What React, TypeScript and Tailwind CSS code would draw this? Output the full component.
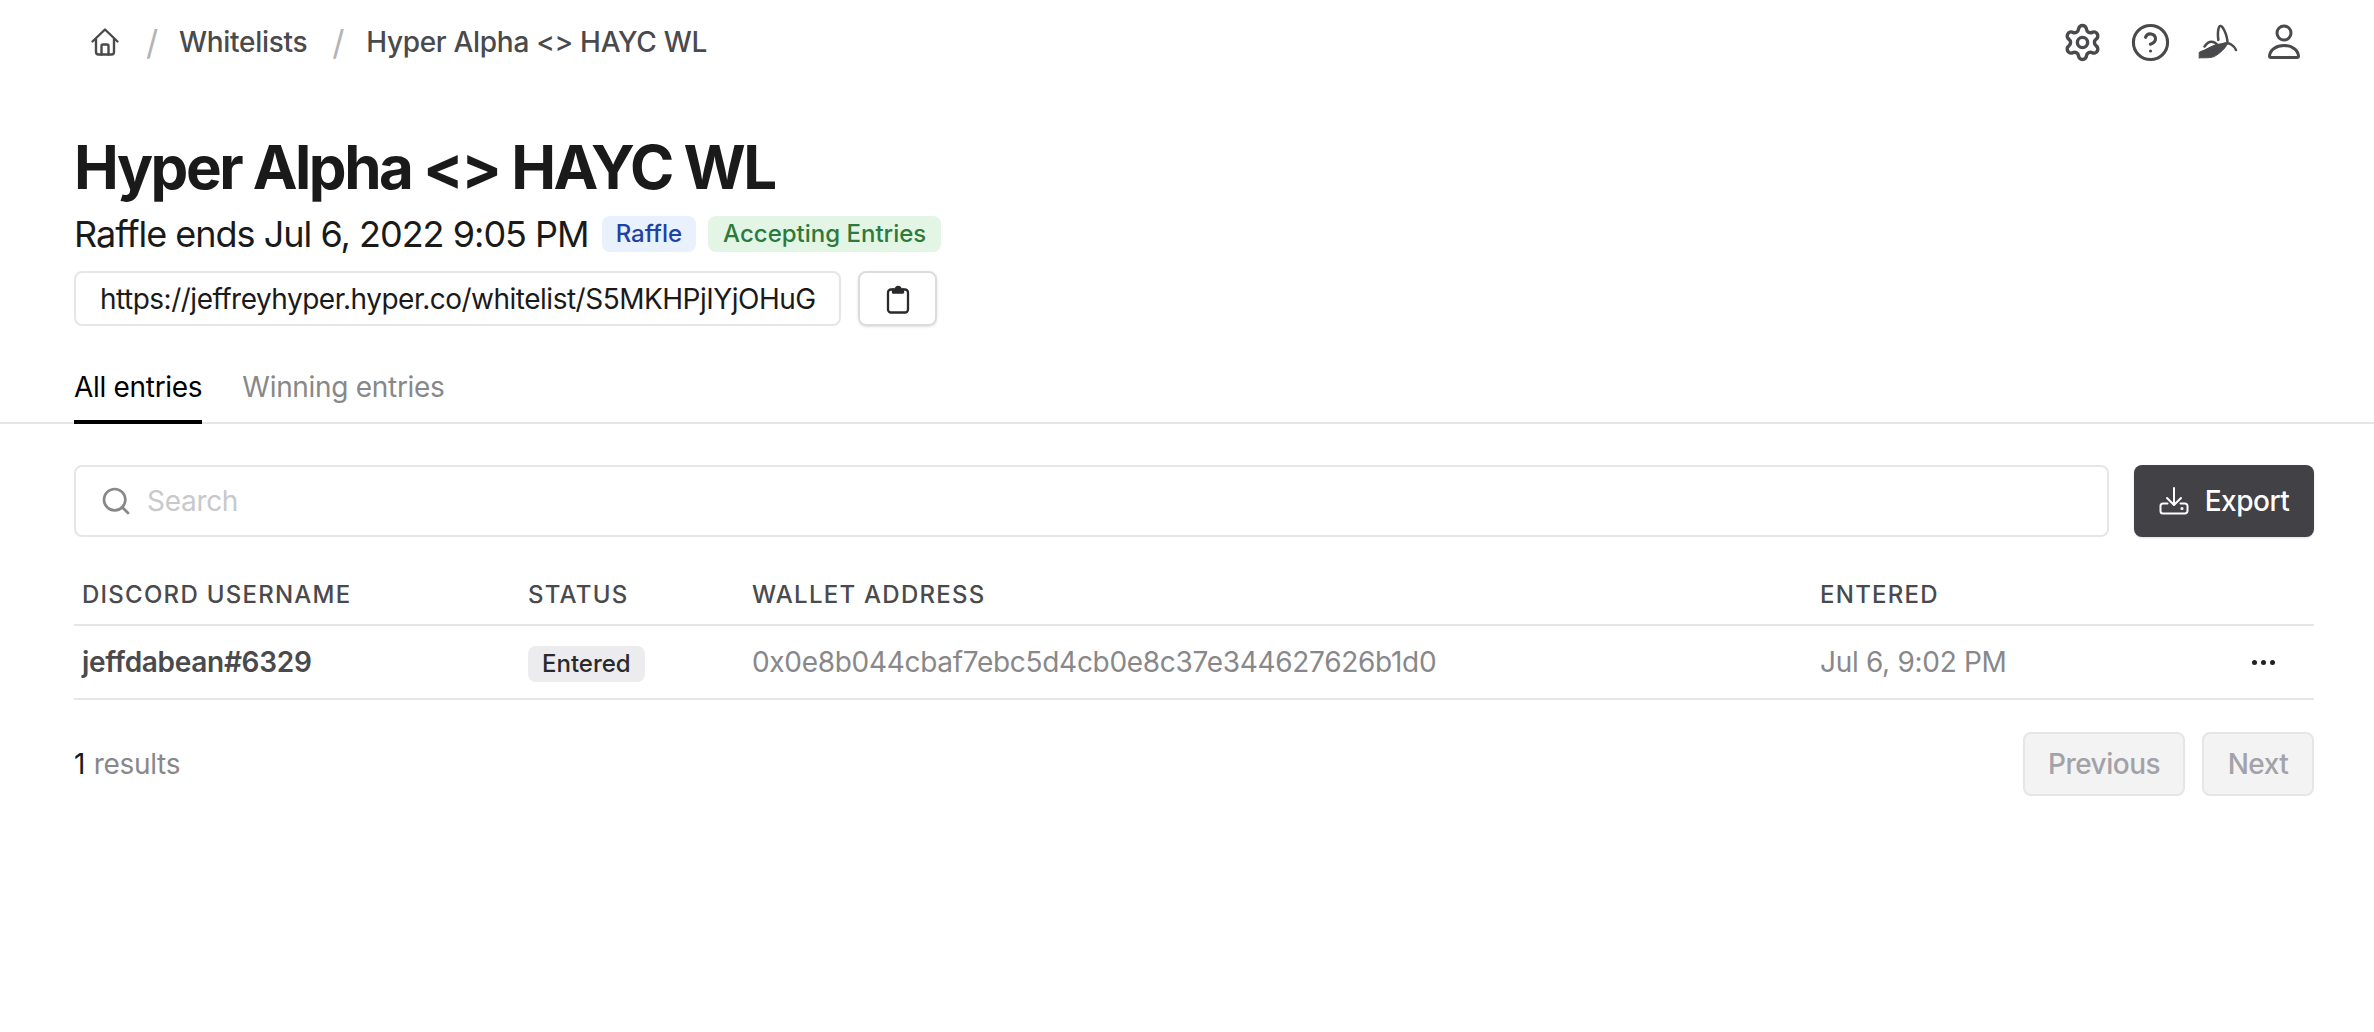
import React from 'react';
import { Search, Settings, CircleHelp } from 'lucide-react';

const HomeIcon = () => (
  <svg width="30" height="30" viewBox="0 0 30 30" fill="none" stroke="#4a4a4d" strokeWidth="2.400" strokeLinecap="round" strokeLinejoin="round">
    <path d="M2.500 14.500 15 2.500l12.500 12" />
    <path d="M6 12v13a2.500 2.500 0 0 0 2.500 2.500h13A2.500 2.500 0 0 0 24 25V12" />
    <path d="M11.500 27.500V19a1.500 1.500 0 0 1 1.500-1.500h4a1.500 1.500 0 0 1 1.500 1.500v8.500" />
  </svg>
);

const BananaIcon = () => (
  <svg width="40" height="36" viewBox="0 0 40 36" fill="none" stroke="#4a4a4d" strokeLinecap="round" strokeLinejoin="round">
    <path d="M20.300 16c-.5-4-.6-9 .5-12.500.5-1.800 2.500-2 3.500-.5 2.500 3.500 4.500 9 5.200 14.500" strokeWidth="2.500" />
    <path d="M1.200 33.800v-5c0-.8.6-1 1.400-1.200C8 26 12 22.500 18 20.800c4-1 8-1.500 11.500-1.300-1 2.500-3 5-5.500 7.300-2.500 2.300-5.500 4.700-8.500 6-3 1-7 1-13.800 1z" fill="#4a4a4d" strokeWidth="1" />
    <path d="M6.500 22.500c2-3 4.500-4.800 7-4.800 2.500 0 4.500 1.300 6 3.300" strokeWidth="2.500" />
    <path d="M24.700 20.300c3-1.300 6-1.300 8.500.2 2 1.200 3.800 3.300 4.800 5.500" strokeWidth="2.500" />
  </svg>
);

const UserIcon = () => (
  <svg width="32" height="36" viewBox="0 0 32 36" fill="none" stroke="#4a4a4d" strokeWidth="3">
    <circle cx="16" cy="9" r="7" />
    <path d="M3 33.500c-1 0-1.500-.5-1.500-1.500C2 26 8 21.500 16 21.500S30 26 30.500 32c0 1-.5 1.500-1.500 1.500H3z" strokeLinejoin="round" />
  </svg>
);

const ClipboardIcon = () => (
  <svg width="24" height="30" viewBox="0 0 24 30" fill="none" stroke="#2a2a2d" strokeWidth="2.300" strokeLinecap="round" strokeLinejoin="round">
    <path d="M7 5.500H5a3 3 0 0 0-3 3V25.500a3 3 0 0 0 3 3h14a3 3 0 0 0 3-3V8.500a3 3 0 0 0-3-3h-2" />
    <path d="M7 8.500v-3h2.500a2.500 2.500 0 0 1 5 0H17v3z" fill="#2a2a2d" />
  </svg>
);

const ExportIcon = () => (
  <svg width="30" height="30" viewBox="0 0 30 30" fill="none" stroke="#ffffff" strokeWidth="2" strokeLinecap="round" strokeLinejoin="round">
    <path d="M15 2v16" />
    <path d="M8 12l7 7 7-7" />
    <path d="M8.500 17.500H4a2.500 2.500 0 0 0-2.500 2.500v5A2.500 2.500 0 0 0 4 27.500h22a2.500 2.500 0 0 0 2.500-2.500v-5a2.500 2.500 0 0 0-2.500-2.500h-4.500" />
    <circle cx="23" cy="22.500" r=".6" fill="#ffffff" />
  </svg>
);

export default function App() {
  return (
    <div className="min-h-screen bg-white font-['Inter',sans-serif] text-[#1a1a1a]">
      {/* Top bar */}
      <div className="h-[84px] flex items-center justify-between pl-[90px] pr-[74px]">
        <div className="flex items-center text-[28px] font-medium tracking-[-0.3px] text-[#4a4a4d]">
          <HomeIcon />
          <span className="ml-[26px] mr-[21px] text-[34px] font-normal text-[#b4b4b6]">/</span>
          <span>Whitelists</span>
          <span className="ml-[25px] mr-[22px] text-[34px] font-normal text-[#b4b4b6]">/</span>
          <span>Hyper Alpha &lt;&gt; HAYC WL</span>
        </div>
        <div className="flex items-center text-[#4a4a4d]">
          <Settings size={41} strokeWidth={2} />
          <CircleHelp size={41} strokeWidth={1.8} className="ml-[27px]" />
          <div className="ml-[27px]"><BananaIcon /></div>
          <div className="ml-[30px]"><UserIcon /></div>
        </div>
      </div>

      {/* Heading */}
      <div className="px-[74px] pt-[44px]">
        <h1 className="text-[60px] leading-[78px] font-bold tracking-[-2.5px]">Hyper Alpha &lt;&gt; HAYC WL</h1>
        <div className="flex items-center mt-[5px] h-[46px]">
          <span className="text-[36px] tracking-[-1px]">Raffle ends Jul 6, 2022 9:05 PM</span>
          <span className="ml-[13px] h-[36px] px-[14px] flex items-center rounded-[8px] bg-[#e9f1fd] text-[#1f42a3] text-[24px] font-medium">Raffle</span>
          <span className="ml-[12px] h-[36px] px-[15px] flex items-center rounded-[8px] bg-[#e3f6e5] text-[#2e7a3d] text-[24px] font-medium">Accepting Entries</span>
        </div>
        <div className="flex items-center mt-[14px] gap-[17px]">
          <div className="w-[767px] h-[55px] flex items-center px-[24px] rounded-[8px] border-2 border-[#e6e6e6] text-[28px] tracking-[-0.5px] whitespace-nowrap">
            <span>https://jeffreyhyper.hyper.co/whitelist/S5MKHPjIYjOHuG</span>
          </div>
          <button className="w-[79px] h-[55px] flex items-center justify-center rounded-[8px] border-2 border-[#dcdce0] shadow-sm">
            <ClipboardIcon />
          </button>
        </div>
      </div>

      {/* Tabs */}
      <div className="mt-[38px] px-[74px] h-[60px] flex gap-[40px] border-b-2 border-[#e6e6e6] text-[28px] tracking-[-0.3px]">
        <div className="h-[60px] border-b-[4px] border-black text-black leading-[46px]">All entries</div>
        <div className="text-[#88888a] leading-[46px]">Winning entries</div>
      </div>

      {/* Search and export */}
      <div className="pl-[74px] pr-[60px] pt-[41px] flex gap-[25px]">
        <div className="flex-1 h-[72px] flex items-center px-[24px] gap-[15px] rounded-[8px] border-2 border-[#e6e6e6] text-[28px] tracking-[-0.3px] text-[#c9c9cc]">
          <Search size={32} strokeWidth={2} color="#88888a" />
          <span>Search</span>
        </div>
        <button className="w-[180px] h-[72px] flex items-center justify-center gap-[16px] rounded-[8px] bg-[#414146] text-white text-[28px] tracking-[-0.5px] font-medium shadow-sm">
          <ExportIcon />
          Export
        </button>
      </div>

      {/* Table */}
      <div className="ml-[74px] mr-[60px] mt-[28px]">
        <div className="h-[61px] flex items-center border-b-2 border-[#e6e6e6] text-[24px] font-medium tracking-[1.25px] text-[#4a4a4d]">
          <div className="w-[454px] pl-[8px]">DISCORD USERNAME</div>
          <div className="w-[224px]">STATUS</div>
          <div className="w-[1068px]">WALLET ADDRESS</div>
          <div>ENTERED</div>
        </div>
        <div className="h-[74px] flex items-center border-b-2 border-[#e6e6e6] text-[28px] tracking-[-0.3px]">
          <div className="w-[454px] pl-[8px] font-semibold text-[#4a4a4d]">jeffdabean#6329</div>
          <div className="w-[224px]">
            <span className="inline-flex h-[36px] px-[14px] items-center rounded-[8px] bg-[#ececee] text-[24px] tracking-normal font-medium text-[#2a2a2d]">Entered</span>
          </div>
          <div className="w-[1068px] text-[#88888a]">0x0e8b044cbaf7ebc5d4cb0e8c37e344627626b1d0</div>
          <div className="flex-1 text-[#88888a]">Jul 6, 9:02 PM</div>
          <div className="w-[62px] flex gap-[4px]">
            <span className="w-[5px] h-[5px] rounded-full bg-[#222]" />
            <span className="w-[5px] h-[5px] rounded-full bg-[#222]" />
            <span className="w-[5px] h-[5px] rounded-full bg-[#222]" />
          </div>
        </div>
        <div className="flex items-center justify-between mt-[32px] text-[28px] tracking-[-0.3px]">
          <div><span>1</span> <span className="ml-[1px] text-[#88888a]">results</span></div>
          <div className="flex gap-[17px] font-medium tracking-[-0.5px] text-[#a2a2a8]">
            <button className="w-[162px] h-[64px] rounded-[8px] border-2 border-[#e6e6e6] bg-[#f3f3f4]">Previous</button>
            <button className="w-[112px] h-[64px] rounded-[8px] border-2 border-[#e6e6e6] bg-[#f3f3f4]">Next</button>
          </div>
        </div>
      </div>
    </div>
  );
}
